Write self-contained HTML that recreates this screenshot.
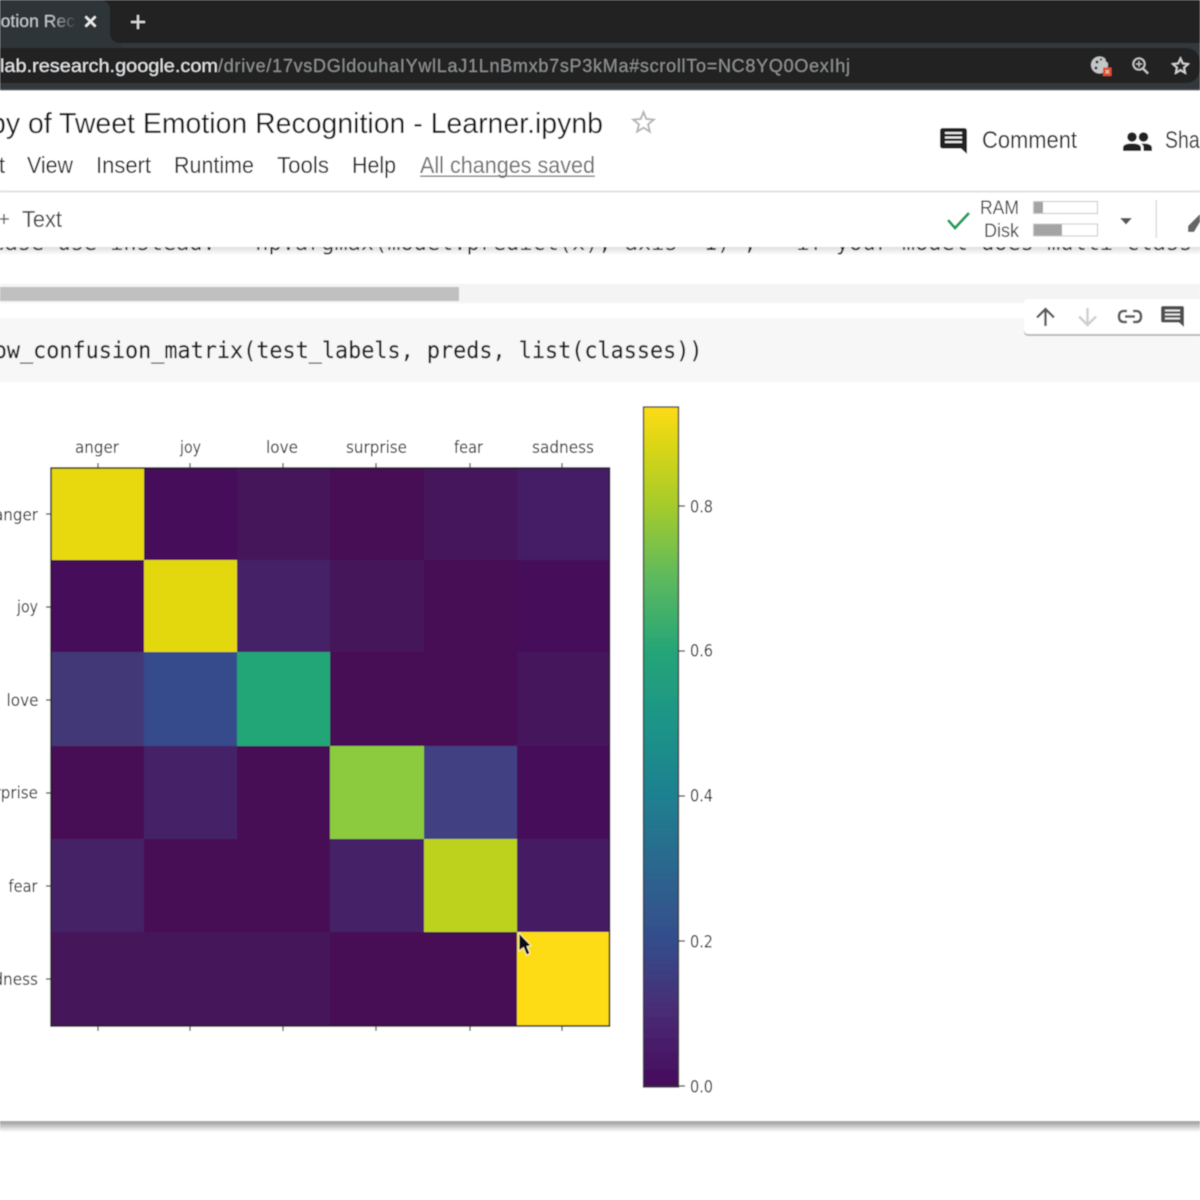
<!DOCTYPE html>
<html><head><meta charset="utf-8"><title>Copy of Tweet Emotion Recognition</title>
<style>
html,body{margin:0;padding:0;background:#fff;width:1200px;height:1200px;overflow:hidden}
svg{display:block}
text{font-family:"Liberation Sans",sans-serif;white-space:pre}
.m{font-family:"DejaVu Sans Mono","Liberation Mono",monospace}
.d{font-family:"DejaVu Sans","Liberation Sans",sans-serif;fill:#2c2c2c;font-size:17px}
</style></head><body>
<svg width="1200" height="1200" viewBox="0 0 1200 1200" xmlns="http://www.w3.org/2000/svg">
<defs>
<filter id="s" x="0" y="0" width="100%" height="100%"><feGaussianBlur stdDeviation="0.45"/></filter>
<linearGradient id="vir" x1="0" y1="1" x2="0" y2="0">
<stop offset="0" stop-color="#460a5c"/><stop offset=".107" stop-color="#4a2a74"/><stop offset=".213" stop-color="#344c8c"/>
<stop offset=".32" stop-color="#2c668e"/><stop offset=".427" stop-color="#1f8090"/><stop offset=".533" stop-color="#1d9488"/>
<stop offset=".64" stop-color="#24a577"/><stop offset=".747" stop-color="#5cb95f"/><stop offset=".853" stop-color="#a4cb2c"/>
<stop offset=".96" stop-color="#e4d812"/><stop offset="1" stop-color="#fddc12"/></linearGradient>
<linearGradient id="fade" gradientUnits="userSpaceOnUse" x1="40" y1="0" x2="76" y2="0"><stop offset=".3" stop-color="#c9cccd"/><stop offset="1" stop-color="#363b3e"/></linearGradient>
<linearGradient id="sh" x1="0" y1="0" x2="0" y2="1"><stop offset="0" stop-color="#aaa"/><stop offset="1" stop-color="#fff"/></linearGradient>
<linearGradient id="sh2" x1="0" y1="0" x2="0" y2="1"><stop offset="0" stop-color="#ddd"/><stop offset="1" stop-color="#ddd" stop-opacity="0"/></linearGradient>
<clipPath id="cl"><rect x="0" y="247" width="1200" height="12"/></clipPath>
</defs>
<g filter="url(#s)">
<rect width="1200" height="1200" fill="#fff"/>
<!-- browser chrome -->
<rect width="1200" height="90" fill="#202122"/>
<rect y="43" width="1200" height="47" fill="#32383b"/>
<path d="M0 0H100Q110 0 110 12V32Q110 43 122 43V48H0Z" fill="#2f3538"/>
<path d="M0 48H1185Q1200 48 1200 65.500Q1200 83 1185 83H0Z" fill="#202122"/>
<rect y="89" width="1200" height="1.500" fill="#555"/>
<text x="-14" y="27" font-size="17.500" fill="url(#fade)" textLength="89" lengthAdjust="spacing">motion Rec</text>
<path d="M85.500 16.500L95.500 26.500M95.500 16.500L85.500 26.500" stroke="#eceded" stroke-width="2.400" fill="none"/>
<path d="M138 15V29M131 22H145" stroke="#d8dadb" stroke-width="2.200" fill="none"/>
<text x="0" y="72" font-size="18" fill="#e4e6e8" textLength="218" lengthAdjust="spacingAndGlyphs">lab.research.google.com</text>
<text x="218" y="72" font-size="18" fill="#8e9193" textLength="632" lengthAdjust="spacing">/drive/17vsDGldouhaIYwlLaJ1LnBmxb7sP3kMa#scrollTo=NC8YQ0OexIhj</text>
<!-- cookie -->
<circle cx="1099.500" cy="65" r="8.500" fill="#c4c6c7"/>
<circle cx="1097" cy="62" r="1.400" fill="#202122"/><circle cx="1101" cy="59.500" r="1.100" fill="#202122"/><circle cx="1096" cy="68" r="1.400" fill="#202122"/><circle cx="1108" cy="60" r="2.500" fill="#202122"/>
<rect x="1103" y="67.500" width="8.500" height="8.500" fill="#db4f2f"/>
<path d="M1105.500 70L1109 73.500M1109 70L1105.500 73.500" stroke="#f3d0c5" stroke-width="1"/>
<!-- zoom -->
<circle cx="1139" cy="64" r="5.700" fill="none" stroke="#c8cacb" stroke-width="1.700"/>
<path d="M1143 68.500L1148 73.500" stroke="#c8cacb" stroke-width="2"/>
<path d="M1136 64H1142M1139 61V67" stroke="#c8cacb" stroke-width="1.300"/>
<!-- star -->
<path d="M1180.500 58.500L1182.700 63.400L1188 64L1184 67.600L1185.100 72.800L1180.500 70.100L1175.900 72.800L1177 67.600L1173 64L1178.300 63.400Z" fill="none" stroke="#d2d4d5" stroke-width="1.800"/>

<!-- header -->
<text x="-10" y="133" font-size="29" fill="#141414" textLength="613" lengthAdjust="spacingAndGlyphs">py of Tweet Emotion Recognition - Learner.ipynb</text>
<path d="M643.500 112L646.300 119L653.800 119.600L648 124.400L649.900 131.700L643.500 127.700L637.100 131.700L639 124.400L633.200 119.600L640.700 119Z" fill="none" stroke="#b4b4b4" stroke-width="1.900"/>
<g font-size="23" fill="#222">
<text x="-1" y="173" textLength="6" lengthAdjust="spacingAndGlyphs">t</text>
<text x="27" y="173" textLength="46" lengthAdjust="spacingAndGlyphs">View</text>
<text x="96" y="173" textLength="55" lengthAdjust="spacingAndGlyphs">Insert</text>
<text x="174" y="173" textLength="80" lengthAdjust="spacingAndGlyphs">Runtime</text>
<text x="277" y="173" textLength="52" lengthAdjust="spacingAndGlyphs">Tools</text>
<text x="352" y="173" textLength="44" lengthAdjust="spacingAndGlyphs">Help</text>
</g>
<text x="420" y="173" font-size="23" fill="#6f6f6f" textLength="175" lengthAdjust="spacingAndGlyphs">All changes saved</text>
<rect x="420" y="175.500" width="175" height="1.300" fill="#6f6f6f"/>
<!-- comment icon -->
<path d="M943 128H964Q967 128 967 131V154L961 148.500H943Q940 148.500 940 145.500V131Q940 128 943 128Z" fill="#222"/>
<path d="M945 133H962M945 137.500H962M945 142H962" stroke="#eee" stroke-width="2"/>
<text x="982" y="148" font-size="24" fill="#222" textLength="95" lengthAdjust="spacingAndGlyphs">Comment</text>
<!-- people -->
<circle cx="1132" cy="137" r="4.800" fill="#222"/><circle cx="1143.500" cy="137" r="4.800" fill="#222"/>
<path d="M1123 151V148Q1123 143.500 1132 143.500Q1141 143.500 1141 148V151Z" fill="#222"/>
<path d="M1141 143.500Q1152 143 1152 148V151H1143.500V147.500Q1143.500 145 1141 143.500Z" fill="#222"/>
<text x="1165" y="148" font-size="24" fill="#222" textLength="52" lengthAdjust="spacingAndGlyphs">Share</text>
<rect y="190.500" width="1200" height="2" fill="#e0e0e0"/>

<!-- toolbar -->
<path d="M0 219H9M4 214V224" stroke="#666" stroke-width="1.500" fill="none"/>
<text x="22" y="227" font-size="23" fill="#444" textLength="40" lengthAdjust="spacingAndGlyphs">Text</text>
<path d="M948 220L955 228L969 213" fill="none" stroke="#0f9d58" stroke-width="2.800"/>
<text x="980" y="214" font-size="19" fill="#444" textLength="39" lengthAdjust="spacingAndGlyphs">RAM</text>
<text x="984" y="237" font-size="19" fill="#444" textLength="35" lengthAdjust="spacingAndGlyphs">Disk</text>
<rect x="1033.500" y="201.500" width="64" height="12" fill="#fff" stroke="#c8c8c8"/>
<rect x="1034" y="202" width="9" height="11" fill="#a4a4a4"/>
<rect x="1033.500" y="224" width="64" height="12" fill="#fff" stroke="#c8c8c8"/>
<rect x="1034" y="224.500" width="28" height="11" fill="#a4a4a4"/>
<path d="M1120 218H1132L1126 224.500Z" fill="#555"/>
<rect x="1155.500" y="200" width="1.500" height="38" fill="#ddd"/>
<path d="M1188 232V226L1200 214V222L1194 232Z" fill="#666"/>

<!-- clipped output line -->
<rect y="247" width="1200" height="8" fill="url(#sh2)"/>
<text class="m" x="-35" y="250" font-size="22" fill="#222" clip-path="url(#cl)" textLength="1280" lengthAdjust="spacingAndGlyphs">Please use instead:* `np.argmax(model.predict(x), axis=-1)`,   if your model does multi-class cla</text>

<!-- scrollbar -->
<rect y="284" width="1200" height="19" fill="#f4f4f4"/>
<rect y="287" width="459" height="14" fill="#c0c0c0"/>
<!-- code cell -->
<rect y="318" width="1200" height="64" fill="#f7f7f7"/>
<text class="m" x="-32.500" y="358" font-size="23" fill="#1c1c1c" stroke="#1c1c1c" stroke-width=".25" textLength="735" lengthAdjust="spacingAndGlyphs">show_confusion_matrix(test_labels, preds, list(classes))</text>

<!-- cell toolbar -->
<rect x="1024" y="301" width="190" height="35" rx="4" fill="#bbb"/>
<rect x="1024" y="299" width="190" height="35" rx="4" fill="#fff"/>
<path d="M1045.500 326V309M1037 317.500L1045.500 309L1054 317.500" fill="none" stroke="#5a5a5a" stroke-width="2.400"/>
<path d="M1087.500 308V325M1079 316.500L1087.500 325L1096 316.500" fill="none" stroke="#cfcfcf" stroke-width="2.400"/>
<path d="M1127 311H1124Q1119 311 1119 316.500Q1119 322 1124 322H1127M1133 311H1136Q1141 311 1141 316.500Q1141 322 1136 322H1133M1125 316.500H1135" fill="none" stroke="#5a5a5a" stroke-width="2.600"/>
<path d="M1163 306H1182Q1184 306 1184 308V327L1179 322.500H1163Q1161 322.500 1161 320.500V308Q1161 306 1163 306Z" fill="#505050"/>
<path d="M1165 310.500H1180M1165 314.500H1180M1165 318.500H1180" stroke="#f4f4f4" stroke-width="1.700"/>

<!-- matrix -->
<g shape-rendering="crispEdges">
<rect x="51" y="468" width="93" height="92" fill="#e7d90f"/><rect x="144" y="468" width="93" height="92" fill="#45105a"/><rect x="237" y="468" width="93" height="92" fill="#44125a"/><rect x="330" y="468" width="94" height="92" fill="#470a55"/><rect x="424" y="468" width="93" height="92" fill="#45155b"/><rect x="517" y="468" width="93" height="92" fill="#451a66"/>
<rect x="51" y="560" width="93" height="92" fill="#450f5a"/><rect x="144" y="560" width="93" height="92" fill="#e2d80f"/><rect x="237" y="560" width="93" height="92" fill="#442168"/><rect x="330" y="560" width="94" height="92" fill="#44145a"/><rect x="424" y="560" width="93" height="92" fill="#470a55"/><rect x="517" y="560" width="93" height="92" fill="#44105a"/>
<rect x="51" y="652" width="93" height="94" fill="#433878"/><rect x="144" y="652" width="93" height="94" fill="#344c8c"/><rect x="237" y="652" width="93" height="94" fill="#24a577"/><rect x="330" y="652" width="94" height="94" fill="#470a55"/><rect x="424" y="652" width="93" height="94" fill="#470a55"/><rect x="517" y="652" width="93" height="94" fill="#45165c"/>
<rect x="51" y="746" width="93" height="93" fill="#470a55"/><rect x="144" y="746" width="93" height="93" fill="#442368"/><rect x="237" y="746" width="93" height="93" fill="#470a55"/><rect x="330" y="746" width="94" height="93" fill="#8ccb3e"/><rect x="424" y="746" width="93" height="93" fill="#3f3f82"/><rect x="517" y="746" width="93" height="93" fill="#45105a"/>
<rect x="51" y="839" width="93" height="93" fill="#442266"/><rect x="144" y="839" width="93" height="93" fill="#470a55"/><rect x="237" y="839" width="93" height="93" fill="#470a55"/><rect x="330" y="839" width="94" height="93" fill="#442268"/><rect x="424" y="839" width="93" height="93" fill="#bcd21a"/><rect x="517" y="839" width="93" height="93" fill="#451c64"/>
<rect x="51" y="932" width="93" height="94" fill="#44125a"/><rect x="144" y="932" width="93" height="94" fill="#44125a"/><rect x="237" y="932" width="93" height="94" fill="#44125a"/><rect x="330" y="932" width="94" height="94" fill="#470a55"/><rect x="424" y="932" width="93" height="94" fill="#470a55"/><rect x="517" y="932" width="93" height="94" fill="#fddc12"/>
</g>
<rect x="51" y="468" width="558.500" height="558" fill="none" stroke="#222" stroke-width="1.500"/>
<path d="M98 463V468M190 463V468M283 463V468M376 463V468M470 463V468M562 463V468M98 1026V1031M190 1026V1031M283 1026V1031M376 1026V1031M470 1026V1031M562 1026V1031M46 514H51M46 607H51M46 700H51M46 793H51M46 886H51M46 979H51" stroke="#333" stroke-width="1.200"/>
<text class="d" x="75" y="453" textLength="44" lengthAdjust="spacingAndGlyphs">anger</text>
<text class="d" x="180" y="453" textLength="21" lengthAdjust="spacingAndGlyphs">joy</text>
<text class="d" x="266" y="453" textLength="32" lengthAdjust="spacingAndGlyphs">love</text>
<text class="d" x="346" y="453" textLength="61" lengthAdjust="spacingAndGlyphs">surprise</text>
<text class="d" x="454" y="453" textLength="29" lengthAdjust="spacingAndGlyphs">fear</text>
<text class="d" x="532" y="453" textLength="62" lengthAdjust="spacingAndGlyphs">sadness</text>
<text class="d" x="-6" y="520.500" textLength="44" lengthAdjust="spacingAndGlyphs">anger</text>
<text class="d" x="17" y="612.500" textLength="21" lengthAdjust="spacingAndGlyphs">joy</text>
<text class="d" x="6.500" y="706" textLength="32" lengthAdjust="spacingAndGlyphs">love</text>
<text class="d" x="-23" y="798.500" textLength="61" lengthAdjust="spacingAndGlyphs">surprise</text>
<text class="d" x="8.500" y="892" textLength="29" lengthAdjust="spacingAndGlyphs">fear</text>
<text class="d" x="-24" y="985" textLength="62" lengthAdjust="spacingAndGlyphs">sadness</text>

<!-- colorbar -->
<rect x="643.500" y="407" width="35" height="680" fill="url(#vir)" stroke="#333" stroke-width="1.300"/>
<path d="M679 506H685M679 651H685M679 796H685M679 941H685M679 1086H685" stroke="#333" stroke-width="1.200"/>
<text class="d" x="690" y="512.500" textLength="23" lengthAdjust="spacingAndGlyphs">0.8</text>
<text class="d" x="690" y="656.500" textLength="23" lengthAdjust="spacingAndGlyphs">0.6</text>
<text class="d" x="690" y="801.500" textLength="23" lengthAdjust="spacingAndGlyphs">0.4</text>
<text class="d" x="690" y="947.500" textLength="23" lengthAdjust="spacingAndGlyphs">0.2</text>
<text class="d" x="690" y="1092.500" textLength="23" lengthAdjust="spacingAndGlyphs">0.0</text>
<!-- cursor -->
<path d="M519 933V951L523.500 947.500L526.500 955L530 953.500L527 946.500L531 945.500Z" fill="#111" stroke="#fff" stroke-width=".7"/>

<!-- bottom edge -->
<rect y="1121" width="1200" height="2" fill="#a6a6a6"/>
<rect y="1123" width="1200" height="9" fill="url(#sh)"/>
</g>
</svg>
</body></html>
